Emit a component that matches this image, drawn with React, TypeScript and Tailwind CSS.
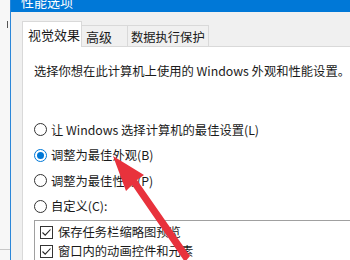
import React from "react";

const font = { fontFamily: '"Noto Sans CJK SC", "Noto Sans", sans-serif' };

const Radio = ({ checked, label }: { checked?: boolean; label: string }) => (
  <div className="flex h-[25.5px] items-center">
    <span
      className={
        "flex h-[13px] w-[13px] items-center justify-center rounded-full border bg-white " +
        (checked ? "border-[#0078d7]" : "border-[#333]")
      }
    >
      {checked && <span className="h-[7px] w-[7px] rounded-full bg-[#0078d7]" />}
    </span>
    <span className="ml-[4px]">{label}</span>
  </div>
);

const Check = ({ label }: { label: string }) => (
  <div className="flex h-[19px] items-center">
    <span className="flex h-[13px] w-[13px] items-center justify-center border border-[#333] bg-white">
      <svg width="11" height="11" viewBox="0 0 11 11">
        <path d="M1.5 5.5 L4.2 8.2 L9.5 2.5" fill="none" stroke="#222" strokeWidth="1.1" />
      </svg>
    </span>
    <span className="ml-[5px]">{label}</span>
  </div>
);

export default function App() {
  return (
    <div className="relative flex h-[260px] w-[350px] overflow-hidden bg-[#f7f7f7] text-[12.3px] text-[#1a1a1a]" style={font}>
      <div className="flex w-[10px] flex-col">
        <div className="ml-[7px] mt-[21px] h-[7px] w-[1px] bg-[#555]" />
        <div className="mt-[221px] h-[1px] w-full bg-[#c8c8c8]" />
      </div>
      <div className="flex flex-1 flex-col border-l border-[#2a86d8]">
        <div className="h-[17px] bg-[#0078d7] pl-[10px] text-[13px] text-white">
          <div className="-mt-[8px] leading-[20px]">性能选项</div>
        </div>
        <div className="flex flex-1 flex-col bg-[#f0f0f0] pl-[11px] pt-[9px] text-[13px]">
          <div className="flex h-[25px] items-end">
            <div className="relative z-10 -mb-[1px] flex h-[26px] w-[60px] items-center border border-b-0 border-[#d9d9d9] bg-white pl-[5px] pt-[1px]">
              视觉效果
            </div>
            <div className="flex h-[21px] w-[46px] items-center border border-l-0 border-b-0 border-[#d9d9d9] bg-[#f0f0f0] pl-[4px] pt-[2px]">
              高级
            </div>
            <div className="flex h-[21px] w-[81px] items-center border border-l-0 border-b-0 border-[#d9d9d9] bg-[#f0f0f0] pl-[3px] pt-[2px] text-[12.3px]">
              数据执行保护
            </div>
          </div>
          <div className="flex flex-1 flex-col border-l border-t border-[#d9d9d9] bg-white pl-[11px] pt-[15px] text-[12.3px]">
            <div className="whitespace-nowrap leading-[18px]">
              选择你想在此计算机上使用的 Windows 外观和性能设置。
            </div>
            <div className="mt-[37px] flex flex-col">
              <Radio label="让 Windows 选择计算机的最佳设置(L)" />
              <Radio checked label="调整为最佳外观(B)" />
              <Radio label="调整为最佳性能(P)" />
              <Radio label="自定义(C):" />
            </div>
            <div className="mt-[1px] flex flex-1 flex-col border-l border-t border-[#a0a0a0] pl-[5px] pt-[2px]">
              <Check label="保存任务栏缩略图预览" />
              <Check label="窗口内的动画控件和元素" />
            </div>
          </div>
        </div>
      </div>
      <svg className="pointer-events-none absolute left-0 top-0" width="350" height="260" viewBox="0 0 350 260">
        <path d="M113 156 L144 175 L137 180 L190 256 L185 262 L132 185 L126 191 Z" fill="#e8323c" />
      </svg>
    </div>
  );
}
